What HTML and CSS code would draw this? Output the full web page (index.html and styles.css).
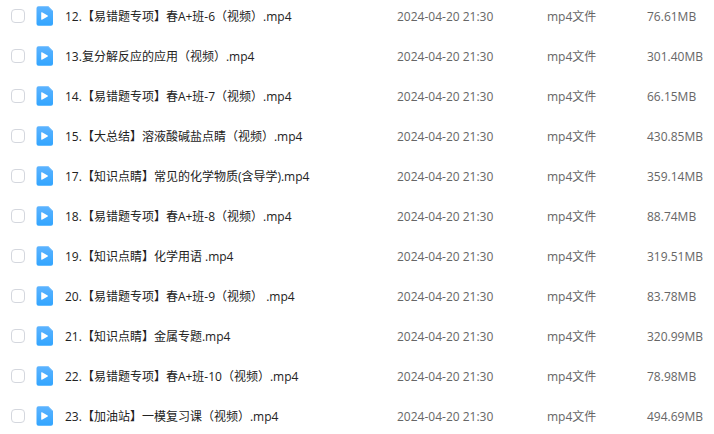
FILE: index.html
```
<!DOCTYPE html>
<html lang="zh-CN">
<head>
    <meta charset="UTF-8">
    <meta name="viewport" content="width=device-width, initial-scale=1.0">
    <title>文件列表</title>
    <link rel="stylesheet" href="styles.css">
</head>
<body>
    <svg class="sprite" aria-hidden="true">
        <linearGradient id="icon-fill" x1="0" y1="0" x2="0" y2="1">
            <stop offset="0" stop-color="#5cb3ff"/>
            <stop offset="1" stop-color="#32a5ff"/>
        </linearGradient>
        <symbol id="icon-video" viewBox="0 0 18 20">
            <path fill="url(#icon-fill)" d="M2.500 .3H12.300L17 5V17.700a2 2 0 0 1-2 2H2.500a2 2 0 0 1-2-2V2.300a2 2 0 0 1 2-2z"/>
            <path fill="#86c7ff" d="M12.300 .3L17 5H16.200L11.500 .3z"/>
            <path fill="#fff" d="M5.200 6.700v6.600a.5.5 0 0 0 .8.400l5.700-3.300a.5.5 0 0 0 0-.8L6 6.300a.5.5 0 0 0-.8.400z"/>
        </symbol>
    </svg>

    <table class="file-list">
        <tbody>
            <tr>
                <td class="check"><input type="checkbox" id="f12"></td>
                <td class="name"><label for="f12"><svg class="icon"><use href="#icon-video"/></svg><span>12.【易错题专项】春A+班-6（视频）.mp4</span></label></td>
                <td class="date">2024-04-20 21:30</td>
                <td class="type">mp4文件</td>
                <td class="size">76.61MB</td>
            </tr>
            <tr>
                <td class="check"><input type="checkbox" id="f13"></td>
                <td class="name"><label for="f13"><svg class="icon"><use href="#icon-video"/></svg><span>13.复分解反应的应用（视频）.mp4</span></label></td>
                <td class="date">2024-04-20 21:30</td>
                <td class="type">mp4文件</td>
                <td class="size">301.40MB</td>
            </tr>
            <tr>
                <td class="check"><input type="checkbox" id="f14"></td>
                <td class="name"><label for="f14"><svg class="icon"><use href="#icon-video"/></svg><span>14.【易错题专项】春A+班-7（视频）.mp4</span></label></td>
                <td class="date">2024-04-20 21:30</td>
                <td class="type">mp4文件</td>
                <td class="size">66.15MB</td>
            </tr>
            <tr>
                <td class="check"><input type="checkbox" id="f15"></td>
                <td class="name"><label for="f15"><svg class="icon"><use href="#icon-video"/></svg><span>15.【大总结】溶液酸碱盐点睛（视频）.mp4</span></label></td>
                <td class="date">2024-04-20 21:30</td>
                <td class="type">mp4文件</td>
                <td class="size">430.85MB</td>
            </tr>
            <tr>
                <td class="check"><input type="checkbox" id="f17"></td>
                <td class="name"><label for="f17"><svg class="icon"><use href="#icon-video"/></svg><span>17.【知识点睛】常见的化学物质(含导学).mp4</span></label></td>
                <td class="date">2024-04-20 21:30</td>
                <td class="type">mp4文件</td>
                <td class="size">359.14MB</td>
            </tr>
            <tr>
                <td class="check"><input type="checkbox" id="f18"></td>
                <td class="name"><label for="f18"><svg class="icon"><use href="#icon-video"/></svg><span>18.【易错题专项】春A+班-8（视频）.mp4</span></label></td>
                <td class="date">2024-04-20 21:30</td>
                <td class="type">mp4文件</td>
                <td class="size">88.74MB</td>
            </tr>
            <tr>
                <td class="check"><input type="checkbox" id="f19"></td>
                <td class="name"><label for="f19"><svg class="icon"><use href="#icon-video"/></svg><span>19.【知识点睛】化学用语 .mp4</span></label></td>
                <td class="date">2024-04-20 21:30</td>
                <td class="type">mp4文件</td>
                <td class="size">319.51MB</td>
            </tr>
            <tr>
                <td class="check"><input type="checkbox" id="f20"></td>
                <td class="name"><label for="f20"><svg class="icon"><use href="#icon-video"/></svg><span>20.【易错题专项】春A+班-9（视频） .mp4</span></label></td>
                <td class="date">2024-04-20 21:30</td>
                <td class="type">mp4文件</td>
                <td class="size">83.78MB</td>
            </tr>
            <tr>
                <td class="check"><input type="checkbox" id="f21"></td>
                <td class="name"><label for="f21"><svg class="icon"><use href="#icon-video"/></svg><span>21.【知识点睛】金属专题.mp4</span></label></td>
                <td class="date">2024-04-20 21:30</td>
                <td class="type">mp4文件</td>
                <td class="size">320.99MB</td>
            </tr>
            <tr>
                <td class="check"><input type="checkbox" id="f22"></td>
                <td class="name"><label for="f22"><svg class="icon"><use href="#icon-video"/></svg><span>22.【易错题专项】春A+班-10（视频）.mp4</span></label></td>
                <td class="date">2024-04-20 21:30</td>
                <td class="type">mp4文件</td>
                <td class="size">78.98MB</td>
            </tr>
            <tr>
                <td class="check"><input type="checkbox" id="f23"></td>
                <td class="name"><label for="f23"><svg class="icon"><use href="#icon-video"/></svg><span>23.【加油站】一模复习课（视频）.mp4</span></label></td>
                <td class="date">2024-04-20 21:30</td>
                <td class="type">mp4文件</td>
                <td class="size">494.69MB</td>
            </tr>
        </tbody>
    </table>
</body>
</html>
```

FILE: styles.css
```
body {
    margin: 0;
    background: #fff;
    font-family: "Open Sans", "Noto Sans CJK SC", sans-serif;
    font-size: 12px;
    line-height: 22px;
}
.sprite {
    position: absolute;
    width: 0;
    height: 0;
}
.file-list {
    width: 100%;
    table-layout: fixed;
    border-collapse: collapse;
    color: #666;
}
.file-list td {
    box-sizing: border-box;
    height: 40px;
    padding: 6px 0 0;
    vertical-align: top;
    white-space: nowrap;
}
.file-list tr:last-child td {
    height: 34px;
}
.file-list .check {
    width: 36px;
}
.check input {
    appearance: none;
    display: block;
    box-sizing: border-box;
    width: 14px;
    height: 14px;
    margin: 3px 0 0 11px;
    border: 1px solid #d4d7de;
    border-radius: 4px;
    background: #fff;
}
.check input:checked {
    border-color: #32a5ff;
    background: #32a5ff;
}
.name label {
    display: flex;
    align-items: flex-start;
    gap: 11px;
    color: #222;
}
.icon {
    flex: none;
    width: 18px;
    height: 20px;
}
.file-list .date {
    width: 150px;
}
.file-list .type {
    width: 100px;
}
.file-list .size {
    width: 67px;
}
```
